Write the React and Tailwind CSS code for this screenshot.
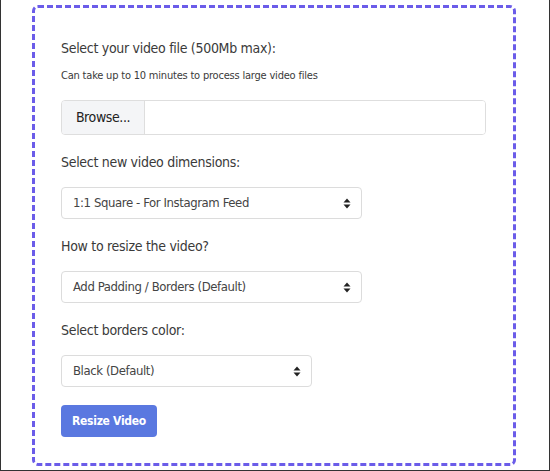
import React from "react";

const FONT = { fontFamily: '"DejaVu Sans Condensed", "DejaVu Sans", sans-serif', fontStretch: "condensed" };

function Arrows() {
  return (
    <svg width="8" height="11" viewBox="0 0 8 11" className="shrink-0">
      <path d="M4 0.5 L7.5 4.5 L0.5 4.5 Z" fill="#222" />
      <path d="M4 10.5 L7.5 6.5 L0.5 6.5 Z" fill="#222" />
    </svg>
  );
}

function FakeSelect({ value, width }) {
  return (
    <div
      className={`${width} h-[32px] flex items-center justify-between pl-[11px] pr-[10px] border border-[#dcdcdc] rounded-[4px] bg-white text-[13px] tracking-[-0.4px] text-[#444]`}
    >
      <span>{value}</span>
      <Arrows />
    </div>
  );
}

export default function App() {
  return (
    <div style={FONT} className="w-[550px] h-[471px] bg-white border-x border-b border-[#333] overflow-hidden">
      <div className="ml-[31px] mt-[5px] w-[484px] h-[461px] border-[3px] border-dashed border-[#6b5ce9] rounded-[6px] pl-[26px] pr-[27px] pt-[30px]">
        {/* File */}
        <label className="block text-[14px] leading-[20px] text-[#3a3a3a] tracking-[-0.3px]">
          Select your video file (500Mb max):
        </label>
        <p className="mt-[8px] text-[11px] leading-[20px] text-[#3a3a3a] tracking-[-0.2px]">
          Can take up to 10 minutes to process large video files
        </p>
        <div className="mt-[14px] h-[35px] flex border border-[#dedede] rounded-[4px] overflow-hidden">
          <div className="w-[83px] bg-[#f4f5f7] border-r border-[#dedede] flex items-center justify-center text-[14px] tracking-[-0.4px] text-[#222]">
            Browse...
          </div>
          <div className="flex-1 bg-white" />
        </div>

        {/* Dimensions */}
        <label className="block mt-[17px] mb-[15px] text-[14px] leading-[20px] text-[#3a3a3a] tracking-[-0.3px]">
          Select new video dimensions:
        </label>
        <FakeSelect value="1:1 Square - For Instagram Feed" width="w-[301px]" />

        {/* Resize mode */}
        <label className="block mt-[17px] mb-[15px] text-[14px] leading-[20px] text-[#3a3a3a] tracking-[-0.3px]">
          How to resize the video?
        </label>
        <FakeSelect value="Add Padding / Borders (Default)" width="w-[301px]" />

        {/* Border color */}
        <label className="block mt-[17px] mb-[15px] text-[14px] leading-[20px] text-[#3a3a3a] tracking-[-0.3px]">
          Select borders color:
        </label>
        <FakeSelect value="Black (Default)" width="w-[251px]" />

        <button className="mt-[18px] w-[96px] h-[32px] rounded-[4px] bg-[#5a78e0] text-white text-[12px] font-bold tracking-[-0.3px] whitespace-nowrap">
          Resize Video
        </button>
      </div>
    </div>
  );
}
